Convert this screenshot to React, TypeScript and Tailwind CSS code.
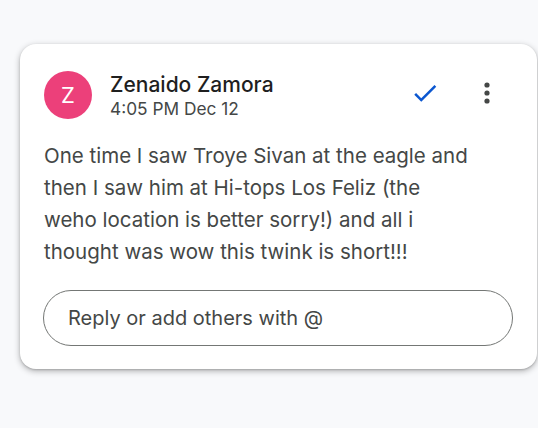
import React from "react";

export default function App() {
  return (
    <div className="w-[538px] h-[428px] bg-[#f8f9fb] pt-[44px] pl-[20px] overflow-hidden" style={{ fontFamily: "Inter, Roboto, 'Noto Sans', sans-serif" }}>
      <div className="w-[517px] h-[325px] bg-white rounded-[16px] shadow-[0_2px_6px_rgba(0,0,0,0.3),0_1px_2px_rgba(0,0,0,0.15)] pt-[27px] px-[24px]">
        <div className="flex items-start">
          <div className="w-[48px] h-[48px] rounded-full bg-[#ec407a] flex items-center justify-center text-white text-[22px]">Z</div>
          <div className="ml-[18px] flex flex-col">
            <div className="text-[21px] leading-[26px] text-[#1f1f1f] font-medium mt-[1px]">Zenaido Zamora</div>
            <div className="text-[17.3px] leading-[22px] text-[#444746]">4:05 PM Dec 12</div>
          </div>
          <div className="ml-auto flex items-center mt-[7px] mr-[22px]">
            <svg width="30" height="30" viewBox="0 0 24 24" className="mr-[43px]">
              <path d="M9 16.17L4.83 12l-1.42 1.41L9 19 21 7l-1.41-1.41z" fill="#0b57d0" />
            </svg>
            <svg width="8" height="24" viewBox="0 0 8 24">
              <circle cx="4" cy="4" r="2.6" fill="#444746" />
              <circle cx="4" cy="12" r="2.6" fill="#444746" />
              <circle cx="4" cy="20" r="2.6" fill="#444746" />
            </svg>
          </div>
        </div>
        <p className="mt-[20px] text-[20.5px] leading-[32px] text-[#444746] whitespace-nowrap">
          One time I saw Troye Sivan at the eagle and<br />
          then I saw him at Hi-tops Los Feliz (the<br />
          weho location is better sorry!) and all i<br />
          thought was wow this twink is short!!!
        </p>
        <div className="mt-[22px] w-[470px] h-[56px] rounded-full border border-[#747775] flex items-center pl-[24px] text-[20px] text-[#444746] -ml-[1px]">
          Reply or add others with @
        </div>
      </div>
    </div>
  );
}
